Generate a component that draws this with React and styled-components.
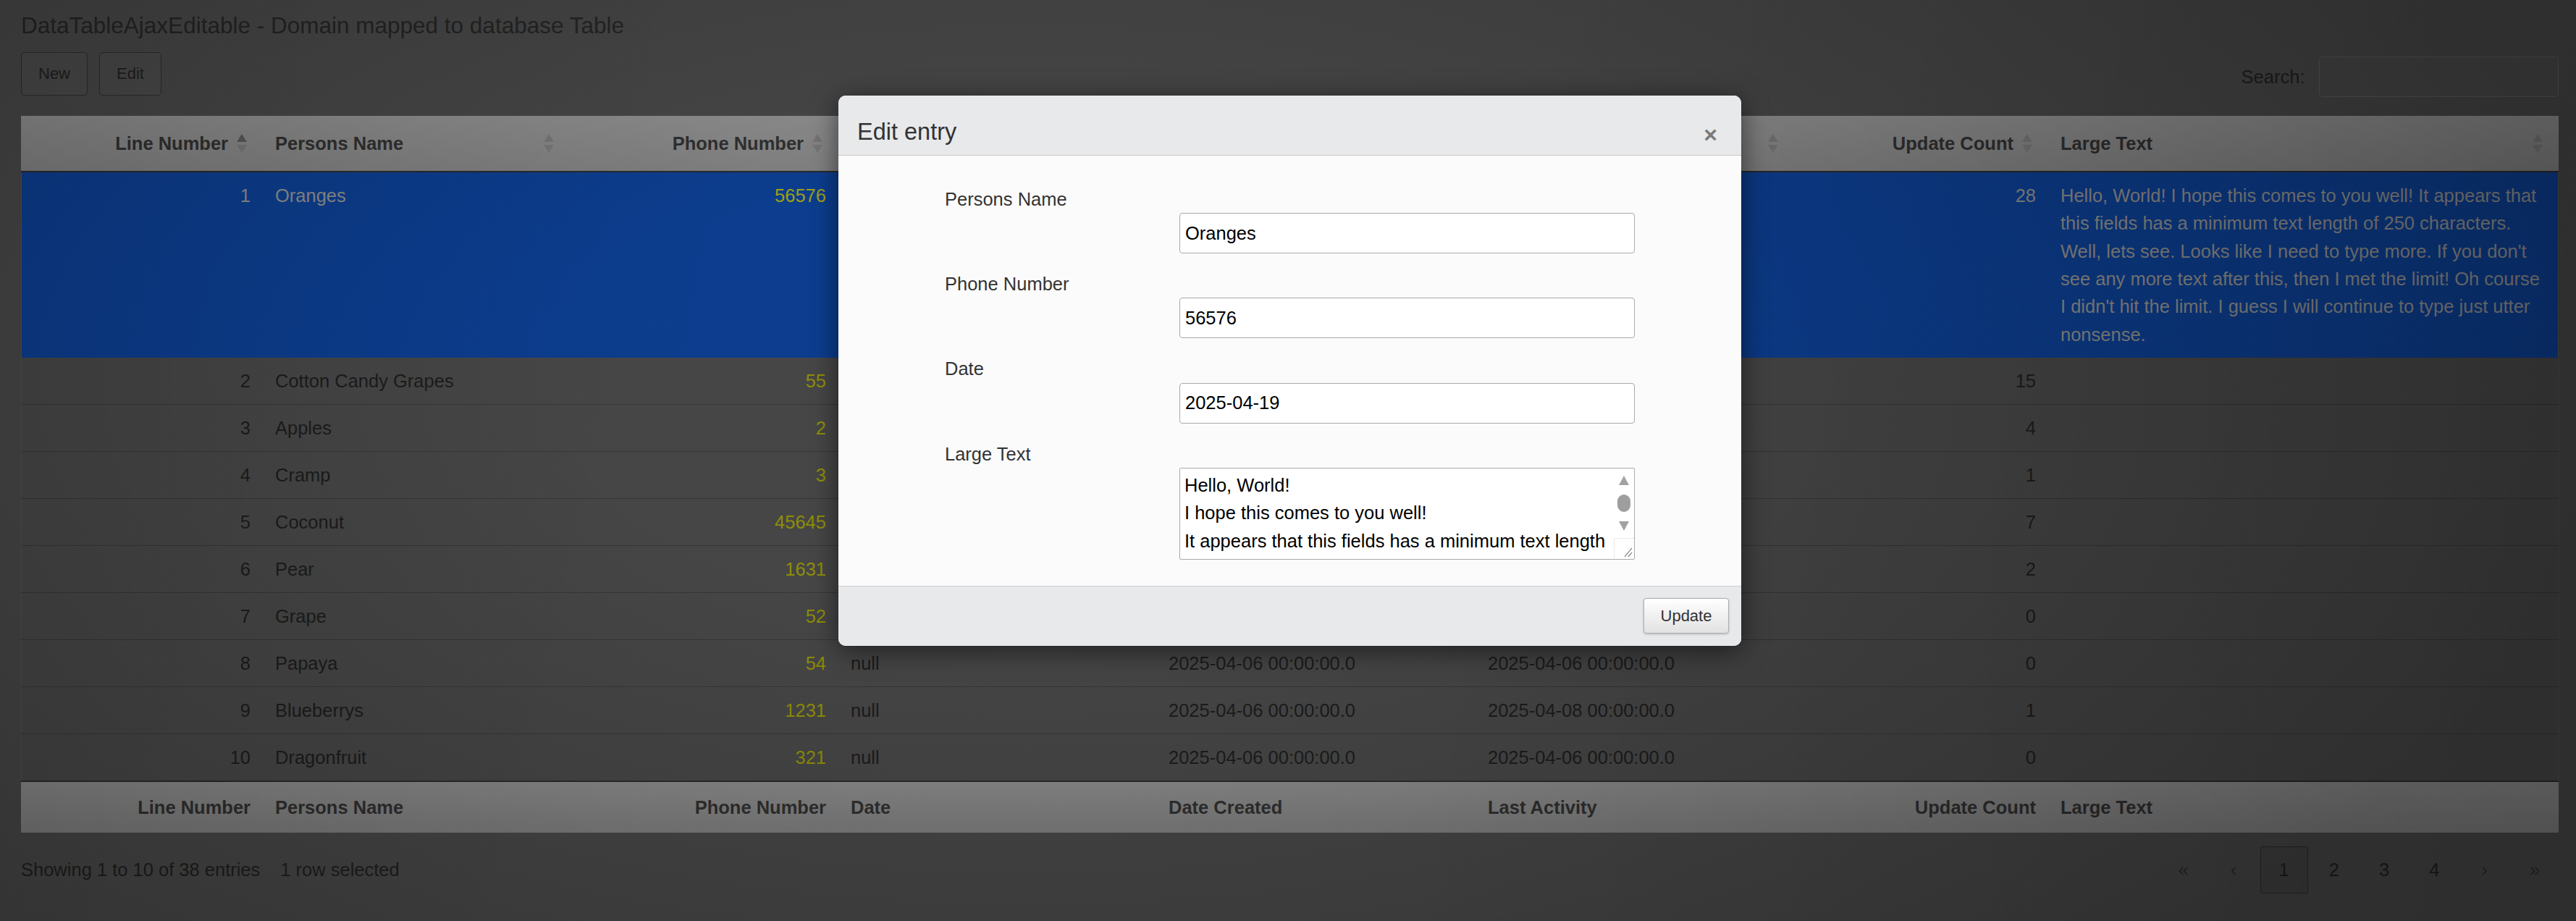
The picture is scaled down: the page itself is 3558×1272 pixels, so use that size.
import React from 'react'
import styled, { createGlobalStyle } from 'styled-components'

const GlobalStyle = createGlobalStyle`
  html, body {
    margin: 0;
    padding: 0;
  }
  body {
    width: 3558px;
    height: 1272px;
    overflow: hidden;
    background: #404040;
    font-family: "Liberation Sans", Arial, sans-serif;
  }
  * {
    box-sizing: border-box;
  }
`

const LARGE_TEXT = [
  'Hello, World!',
  'I hope this comes to you well!',
  'It appears that this fields has a minimum text length of 250 characters.',
  'Well, lets see. Looks like I need to type more.',
  "If you don't see any more text after this, then I met the limit!",
  "Oh course I didn't hit the limit. I guess I will continue to type just utter nonsense.",
]

const COLS = [334, 424, 371, 439, 441, 440, 351, 705]

const HEADERS = [
  { label: 'Line Number', right: true, sorted: true },
  { label: 'Persons Name' },
  { label: 'Phone Number', right: true },
  { label: 'Date' },
  { label: 'Date Created' },
  { label: 'Last Activity' },
  { label: 'Update Count', right: true },
  { label: 'Large Text' },
]

const D6 = '2025-04-06 00:00:00.0'

const ROWS = [
  { n: 1, name: 'Oranges', phone: '56576', date: '2025-04-19', created: D6, last: '2025-04-19 00:00:00.0', count: 28, text: LARGE_TEXT.join(' ') },
  { n: 2, name: 'Cotton Candy Grapes', phone: '55', date: 'null', created: D6, last: D6, count: 15 },
  { n: 3, name: 'Apples', phone: '2', date: 'null', created: D6, last: D6, count: 4 },
  { n: 4, name: 'Cramp', phone: '3', date: 'null', created: D6, last: D6, count: 1 },
  { n: 5, name: 'Coconut', phone: '45645', date: 'null', created: D6, last: D6, count: 7 },
  { n: 6, name: 'Pear', phone: '1631', date: 'null', created: D6, last: D6, count: 2 },
  { n: 7, name: 'Grape', phone: '52', date: 'null', created: D6, last: D6, count: 0 },
  { n: 8, name: 'Papaya', phone: '54', date: 'null', created: D6, last: D6, count: 0 },
  { n: 9, name: 'Blueberrys', phone: '1231', date: 'null', created: D6, last: '2025-04-08 00:00:00.0', count: 1 },
  { n: 10, name: 'Dragonfruit', phone: '321', date: 'null', created: D6, last: D6, count: 0 },
]

const Page = styled.div`
  position: relative;
  width: 3558px;
  height: 1272px;
  padding: 13.6px 24px 0 29px;
  background: #464646;
  color: #1e1e1e;
  font-size: 25.5px;
  line-height: 38px;
`

const Vignette = styled.div`
  position: absolute;
  inset: 0;
  z-index: 1;
  pointer-events: none;
  background:
    linear-gradient(100deg, rgba(0,0,0,0.04) 0%, rgba(0,0,0,0) 30%, rgba(0,0,0,0) 55%, rgba(0,0,0,0.12) 100%),
    radial-gradient(ellipse 62% 85% at 40% 42%, rgba(0,0,0,0) 28%, rgba(0,0,0,0.26) 100%);
`

const Title = styled.h1`
  margin: 0;
  font-size: 31.5px;
  line-height: 42px;
  font-weight: normal;
  color: #242424;
`

const Toolbar = styled.div`
  display: flex;
  justify-content: space-between;
  align-items: flex-start;
  margin-top: 16.7px;
`

const ButtonGroup = styled.div`
  display: flex;
  gap: 16px;
`

const ToolButton = styled.button`
  height: 60px;
  padding: 0 23px;
  font: 22px "Liberation Sans", Arial, sans-serif;
  color: #1f1f1f;
  background: rgba(255,255,255,0.02);
  border: 1px solid #2c2c2c;
  border-radius: 5px;
`

const SearchBox = styled.label`
  display: flex;
  align-items: center;
  gap: 19.5px;
  margin-top: 6px;
  color: #1f1f1f;
`

const SearchInput = styled.input`
  width: 331px;
  height: 56px;
  border: 1px solid #5a5a5a;
  border-radius: 5px;
  background: rgba(255,255,255,0.015);
`

const Table = styled.table`
  margin-top: 26px;
  width: 3505px;
  border-collapse: separate;
  border-spacing: 0;
  table-layout: fixed;
`

const HeadCell = styled.th`
  padding: 18.85px 22px 18.85px 17px;
  font-weight: bold;
  color: #2f2f2f;
  text-align: ${p => (p.$right ? 'right' : 'left')};
  background: linear-gradient(#8c8c8c, #7f7f7f);
  border-bottom: 2px solid #2a2a2a;
`

const HeadInner = styled.div`
  display: flex;
  align-items: center;
  gap: 12px;
`

const HeadLabel = styled.span`
  flex: 1;
  white-space: nowrap;
`

const FootCell = styled.th`
  padding: 15.85px 17px;
  font-weight: bold;
  color: #2f2f2f;
  text-align: ${p => (p.$right ? 'right' : 'left')};
  background: linear-gradient(#888888, #7b7b7b);
  border-top: 2px solid #2a2a2a;
`

const Row = styled.tr`
  background: ${p => (p.$selected ? '#0c3d8e' : '#464646')};
  color: ${p => (p.$selected ? '#8c8c8c' : '#1c1c1c')};
  & + & td {
    border-top: 1px solid #363636;
  }
  td:first-child {
    border-left: 1px solid #4f4f4f;
  }
  td:last-child {
    border-right: 1px solid #4f4f4f;
  }
`

const Cell = styled.td`
  padding: 13px 17px;
  vertical-align: top;
  text-align: ${p => (p.$right ? 'right' : 'left')};
  color: ${p => (p.$phone ? (p.$selected ? '#a0a012' : '#8f8f06') : 'inherit')};
  line-height: ${p => (p.$long ? '38.33px' : '38px')};
`

const InfoRow = styled.div`
  display: flex;
  justify-content: space-between;
  align-items: center;
  margin-top: 19px;
  width: 3505px;
`

const Info = styled.div`
  display: flex;
  gap: 28px;
  color: #1e1e1e;
`

const Pager = styled.div`
  display: flex;
  gap: 3.3px;
`

const PageLink = styled.span`
  width: 66px;
  height: 65px;
  display: flex;
  align-items: center;
  justify-content: center;
  border: 1px solid ${p => (p.$current ? '#2a2a2a' : 'transparent')};
  border-radius: 3px;
  background: ${p => (p.$current ? 'rgba(0,0,0,0.07)' : 'transparent')};
  color: ${p => (p.$muted ? '#2c2c2c' : '#1e1e1e')};
`

const Modal = styled.div`
  position: absolute;
  z-index: 2;
  left: 1158px;
  top: 131.7px;
  width: 1247px;
  border-radius: 10px;
  overflow: hidden;
  background: #fbfbfb;
  box-shadow: 0 6px 36px rgba(0,0,0,0.55);
  color: #333;
`

const ModalHeader = styled.div`
  height: 83.6px;
  padding: 30.4px 33px 0 26px;
  display: flex;
  justify-content: space-between;
  align-items: flex-start;
  background: #e8e9eb;
  border-bottom: 1px solid #c9c9c9;
`

const ModalTitle = styled.h4`
  margin: 0;
  font-size: 32.5px;
  line-height: 40px;
  font-weight: normal;
  color: #333;
`

const Close = styled.button`
  margin-top: 4px;
  padding: 0;
  border: 0;
  background: none;
  font: bold 32px/40px "Liberation Sans", Arial, sans-serif;
  color: #7a7a7a;
`

const ModalBody = styled.div`
  padding: 40.5px 147px 35.7px;
  background: #fbfbfb;
`

const Field = styled.div`
  display: grid;
  grid-template-columns: 324px 1fr;
  & + & {
    margin-top: 23px;
  }
`

const FieldLabel = styled.label`
  grid-column: 1 / -1;
  font-size: 25.5px;
  line-height: 38.3px;
  color: #333;
`

const FieldInput = styled.input`
  grid-column: 2;
  height: 56px;
  padding: 0 7px;
  border: 1px solid #a9a9a9;
  border-radius: 4px;
  background: #fff;
  font: 25.5px "Liberation Sans", Arial, sans-serif;
  color: #000;
`

const AreaBox = styled.div`
  grid-column: 2;
  height: 127.3px;
  display: flex;
  border: 1px solid #a9a9a9;
  border-radius: 2px;
  background: #fff;
`

const Area = styled.textarea`
  flex: 1;
  padding: 4px 6px;
  border: 0;
  outline: none;
  resize: none;
  overflow: hidden;
  background: transparent;
  font: 25.5px/38.3px "Liberation Sans", Arial, sans-serif;
  color: #000;
`

const ModalFooter = styled.div`
  height: 83px;
  display: flex;
  justify-content: flex-end;
  align-items: center;
  padding-right: 17px;
  background: #e8e9eb;
  border-top: 1px solid #cfd0d2;
`

const UpdateButton = styled.button`
  width: 118px;
  height: 49px;
  font: 22px "Liberation Sans", Arial, sans-serif;
  color: #333;
  background: linear-gradient(#ffffff, #e2e2e2);
  border: 1px solid #adadad;
  border-radius: 4px;
  box-shadow: 0 1px 3px rgba(0,0,0,0.22);
`

const SortIcon = ({ active }) => (
  <svg width="14" height="28" viewBox="0 0 14 28">
    <polygon points="0,12 7,1 14,12" fill={active ? '#585858' : '#767676'} />
    <polygon points="0,16 14,16 7,27" fill="#767676" />
  </svg>
)

const ScrollRail = () => (
  <svg width="28" height="125" viewBox="0 0 28 125">
    <polygon points="7,23 14,10 21,23" fill="#a2a2a2" />
    <rect x="5" y="36" width="18" height="24" rx="9" fill="#9e9e9e" />
    <polygon points="7,73 21,73 14,86" fill="#a2a2a2" />
    <path d="M0.5 125 V96.5 H28" fill="none" stroke="#e9e9e9" />
    <path d="M25 110 L15 122 M25 116 L20 122" stroke="#8a8a8a" strokeWidth="1.2" />
  </svg>
)

const App = () => {
  const cells = r => [
    { v: r.n, right: true },
    { v: r.name },
    { v: r.phone, right: true, phone: true },
    { v: r.date },
    { v: r.created },
    { v: r.last },
    { v: r.count, right: true },
    { v: r.text || '', long: true },
  ]

  return (
    <>
      <GlobalStyle />
      <Page>
        <Title>DataTableAjaxEditable - Domain mapped to database Table</Title>
        <Toolbar>
          <ButtonGroup>
            <ToolButton>New</ToolButton>
            <ToolButton>Edit</ToolButton>
          </ButtonGroup>
          <SearchBox>
            Search:
            <SearchInput type="search" />
          </SearchBox>
        </Toolbar>

        <Table>
          <colgroup>
            {COLS.map((w, i) => <col key={i} style={{ width: w }} />)}
          </colgroup>
          <thead>
            <tr>
              {HEADERS.map(h => (
                <HeadCell key={h.label} $right={h.right}>
                  <HeadInner>
                    <HeadLabel>{h.label}</HeadLabel>
                    <SortIcon active={h.sorted} />
                  </HeadInner>
                </HeadCell>
              ))}
            </tr>
          </thead>
          <tbody>
            {ROWS.map(r => (
              <Row key={r.n} $selected={r.n === 1}>
                {cells(r).map((c, i) => (
                  <Cell key={i} $right={c.right} $phone={c.phone} $long={c.long} $selected={r.n === 1}>
                    {c.v}
                  </Cell>
                ))}
              </Row>
            ))}
          </tbody>
          <tfoot>
            <tr>
              {HEADERS.map(h => (
                <FootCell key={h.label} $right={h.right}>{h.label}</FootCell>
              ))}
            </tr>
          </tfoot>
        </Table>

        <InfoRow>
          <Info>
            <span>Showing 1 to 10 of 38 entries</span>
            <span>1 row selected</span>
          </Info>
          <Pager>
            <PageLink $muted>«</PageLink>
            <PageLink $muted>‹</PageLink>
            <PageLink $current>1</PageLink>
            <PageLink>2</PageLink>
            <PageLink>3</PageLink>
            <PageLink>4</PageLink>
            <PageLink $muted>›</PageLink>
            <PageLink $muted>»</PageLink>
          </Pager>
        </InfoRow>

        <Vignette />

        <Modal>
          <ModalHeader>
            <ModalTitle>Edit entry</ModalTitle>
            <Close>×</Close>
          </ModalHeader>
          <ModalBody>
            <Field>
              <FieldLabel>Persons Name</FieldLabel>
              <FieldInput defaultValue="Oranges" />
            </Field>
            <Field>
              <FieldLabel>Phone Number</FieldLabel>
              <FieldInput defaultValue="56576" />
            </Field>
            <Field>
              <FieldLabel>Date</FieldLabel>
              <FieldInput defaultValue="2025-04-19" />
            </Field>
            <Field>
              <FieldLabel>Large Text</FieldLabel>
              <AreaBox>
                <Area defaultValue={LARGE_TEXT.join('\n')} />
                <ScrollRail />
              </AreaBox>
            </Field>
          </ModalBody>
          <ModalFooter>
            <UpdateButton>Update</UpdateButton>
          </ModalFooter>
        </Modal>
      </Page>
    </>
  )
}

export default App
